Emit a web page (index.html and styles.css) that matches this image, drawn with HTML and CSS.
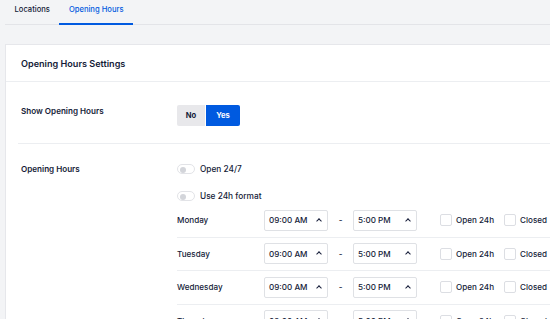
FILE: index.html
```html
<!DOCTYPE html>
<html>
<head>
<meta charset="utf-8">
<link rel="stylesheet" href="styles.css">
</head>
<body>
<div class="tabs">
  <div class="tab">Locations</div>
  <div class="tab active">Opening Hours</div>
</div>
<div class="card">
  <div class="card-header">Opening Hours Settings</div>
  <div class="setting">
    <div class="label">Show Opening Hours</div>
    <div class="content">
      <div class="btn-group">
        <span class="btn">No</span>
        <span class="btn on">Yes</span>
      </div>
    </div>
  </div>
  <div class="setting hours">
    <div class="label">Opening Hours</div>
    <div class="content">
      <div class="toggle-row"><span class="toggle"></span>Open 24/7</div>
      <div class="toggle-row"><span class="toggle"></span>Use 24h format</div>
      <div class="days">
        <div class="day">
          <div class="day-name">Monday</div>
          <div class="time">09:00 AM<span class="caret"></span></div>
          <div class="dash">-</div>
          <div class="time">5:00 PM<span class="caret"></span></div>
          <label class="check"><span class="box"></span>Open 24h</label>
          <label class="check"><span class="box"></span>Closed</label>
        </div>
        <div class="day">
          <div class="day-name">Tuesday</div>
          <div class="time">09:00 AM<span class="caret"></span></div>
          <div class="dash">-</div>
          <div class="time">5:00 PM<span class="caret"></span></div>
          <label class="check"><span class="box"></span>Open 24h</label>
          <label class="check"><span class="box"></span>Closed</label>
        </div>
        <div class="day">
          <div class="day-name">Wednesday</div>
          <div class="time">09:00 AM<span class="caret"></span></div>
          <div class="dash">-</div>
          <div class="time">5:00 PM<span class="caret"></span></div>
          <label class="check"><span class="box"></span>Open 24h</label>
          <label class="check"><span class="box"></span>Closed</label>
        </div>
        <div class="day">
          <div class="day-name">Thursday</div>
          <div class="time">09:00 AM<span class="caret"></span></div>
          <div class="dash">-</div>
          <div class="time">5:00 PM<span class="caret"></span></div>
          <label class="check"><span class="box"></span>Open 24h</label>
          <label class="check"><span class="box"></span>Closed</label>
        </div>
      </div>
    </div>
  </div>
</div>
</body>
</html>
```
FILE: styles.css
```css
* { box-sizing: border-box; }
html, body { margin: 0; padding: 0; }
body {
  background: #f3f4f6;
  font-family: Inter, "Liberation Sans", sans-serif;
  color: #141b38;
  width: 550px;
  height: 319px;
  overflow: hidden;
}
.tabs {
  display: flex;
  margin-left: 5px;
  border-bottom: 1px solid #e3e4e8;
  height: 25px;
}
.tab {
  padding: 4px 9.5px 0;
  font-size: 7.6px;
  font-weight: 500;
  line-height: 11px;
  height: 25px;
  margin-bottom: -1px;
  white-space: nowrap;
}
.tab.active {
  color: #005ae0;
  border-bottom: 2px solid #005ae0;
}
.card {
  margin: 19px 0 0 5px;
  background: #fff;
  border: 1px solid #e6e7eb;
  border-right: none;
  width: 545px;
  overflow: hidden;
}
.card-header {
  height: 37px;
  padding: 0 15px;
  display: flex;
  align-items: center;
  font-size: 9.1px;
  font-weight: 600;
  border-bottom: 1px solid #eceef1;
}
.setting {
  display: flex;
  margin-left: 12px;
  border-bottom: 1px solid #eceef1;
  padding: 23px 0 17px;
  white-space: nowrap;
}
.setting.hours { border-bottom: none; padding-top: 18px; }
.label {
  width: 159px;
  flex: none;
  padding-left: 3px;
  font-size: 8.1px;
  font-weight: 600;
  line-height: 12px;
}
.hours .label { padding-top: 1px; }
.content { flex: 1; }
.btn-group { display: flex; gap: 1px; }
.btn {
  height: 21px;
  display: flex;
  align-items: center;
  justify-content: center;
  font-size: 7.6px;
  font-weight: 700;
  background: #e8e8eb;
  border-radius: 2px 0 0 2px;
  width: 28px;
}
.btn.on {
  background: #005ae0;
  color: #fff;
  width: 34px;
  border-radius: 0 2px 2px 0;
}
.toggle-row {
  display: flex;
  align-items: center;
  gap: 5px;
  font-size: 8.3px;
  font-weight: 500;
  height: 14px;
  margin-bottom: 13px;
}
.toggle-row + .toggle-row { margin-bottom: 0; }
.toggle {
  width: 18px;
  height: 10px;
  border-radius: 5px;
  border: 1px solid #e2e3e7;
  background: #fff;
  position: relative;
}
.toggle::after {
  content: "";
  position: absolute;
  left: 2px;
  top: 2px;
  width: 6px;
  height: 6px;
  border-radius: 50%;
  background: #d3d5da;
}
.days { margin-top: 1px; }
.day {
  display: flex;
  align-items: center;
  height: 33.5px;
  border-bottom: 1px solid #eceef1;
  font-size: 8.1px;
  font-weight: 500;
}
.day-name { width: 87px; flex: none; }
.time {
  width: 64px;
  flex: none;
  height: 21px;
  border: 1px solid #dfe1e5;
  border-radius: 2px;
  display: flex;
  align-items: center;
  padding-left: 4px;
  position: relative;
}
.caret {
  position: absolute;
  left: 52px;
  top: 8px;
  width: 4px;
  height: 4px;
  border-left: 1.2px solid #141b38;
  border-top: 1.2px solid #141b38;
  transform: rotate(45deg);
}
.dash { width: 25px; flex: none; text-align: center; }
.check {
  display: flex;
  align-items: center;
  gap: 4px;
  margin-left: 23px;
  flex: none;
}
.check + .check { margin-left: 10px; }
.box {
  width: 12px;
  height: 12px;
  border: 1px solid #dcdee3;
  border-radius: 2px;
  background: #fff;
}
```
